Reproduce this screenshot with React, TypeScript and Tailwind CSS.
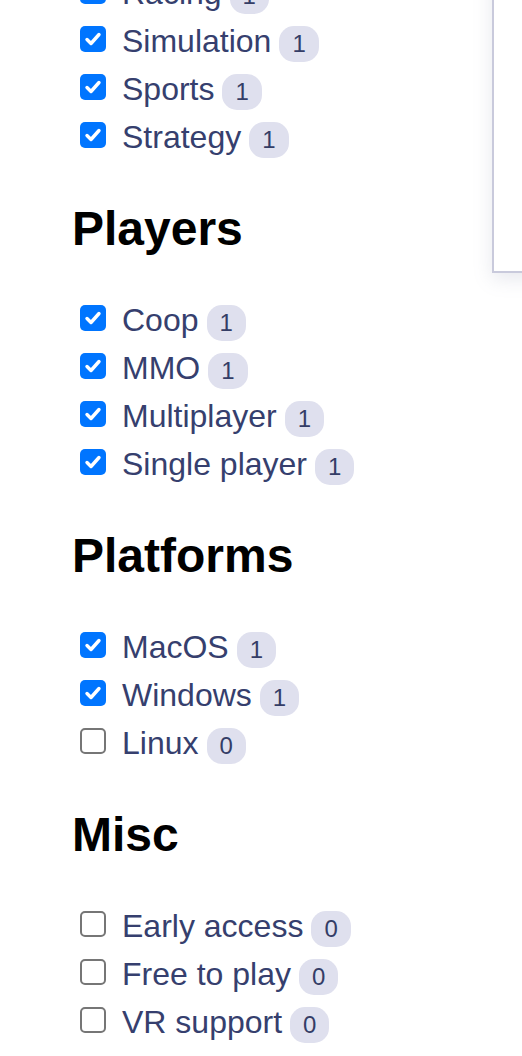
import React from 'react';

type Item = { label: string; count: number; checked: boolean };

const sections: { title?: string; items: Item[] }[] = [
  {
    items: [
      { label: 'Racing', count: 1, checked: true },
      { label: 'Simulation', count: 1, checked: true },
      { label: 'Sports', count: 1, checked: true },
      { label: 'Strategy', count: 1, checked: true },
    ],
  },
  {
    title: 'Players',
    items: [
      { label: 'Coop', count: 1, checked: true },
      { label: 'MMO', count: 1, checked: true },
      { label: 'Multiplayer', count: 1, checked: true },
      { label: 'Single player', count: 1, checked: true },
    ],
  },
  {
    title: 'Platforms',
    items: [
      { label: 'MacOS', count: 1, checked: true },
      { label: 'Windows', count: 1, checked: true },
      { label: 'Linux', count: 0, checked: false },
    ],
  },
  {
    title: 'Misc',
    items: [
      { label: 'Early access', count: 0, checked: false },
      { label: 'Free to play', count: 0, checked: false },
      { label: 'VR support', count: 0, checked: false },
    ],
  },
];

const Box: React.FC<{ checked: boolean }> = ({ checked }) =>
  checked ? (
    <span className="mt-[11px] flex h-[26px] w-[26px] shrink-0 items-center justify-center rounded-[5px] bg-[#0075ff]">
      <svg width="20" height="20" viewBox="0 0 20 20" fill="none">
        <path d="M4 10.5l4 4L16 5.5" stroke="#fff" strokeWidth="3.4" strokeLinecap="round" strokeLinejoin="round" />
      </svg>
    </span>
  ) : (
    <span className="mt-[11px] block h-[26px] w-[26px] shrink-0 rounded-[5px] border-2 border-[#767676] bg-white" />
  );

const Row: React.FC<{ item: Item }> = ({ item }) => (
  <label className="flex h-[48px] items-start gap-[16px] pl-[8px]">
    <Box checked={item.checked} />
    <span className="whitespace-nowrap text-[32px] leading-[52px] text-[#363f6e]">
      {item.label}
      <span className="ml-[8px] inline-block rounded-[15px] bg-[#dfe0ee] px-[13px] py-[4px] text-[24px] leading-[28px] text-[#343d66]">
        {item.count}
      </span>
    </span>
  </label>
);

export default function App() {
  return (
    <div className="relative h-[1056px] w-[522px] overflow-hidden bg-white" style={{ fontFamily: '"Liberation Sans", Arial, sans-serif' }}>
      <div className="absolute left-[492px] top-[-60px] h-[333px] w-[120px] border-2 border-[#c9cadc] bg-white shadow-[0_6px_18px_rgba(120,125,160,0.18)]" />
      <div className="-mt-[33px] pl-[72px]">
        {sections.map((s, i) => (
          <div key={i}>
            {s.title && (
              <h2 className="mb-[37px] mt-[42px] text-[48px] font-bold leading-[56px] text-black">{s.title}</h2>
            )}
            {s.items.map((it) => (
              <Row key={it.label} item={it} />
            ))}
          </div>
        ))}
      </div>
    </div>
  );
}
